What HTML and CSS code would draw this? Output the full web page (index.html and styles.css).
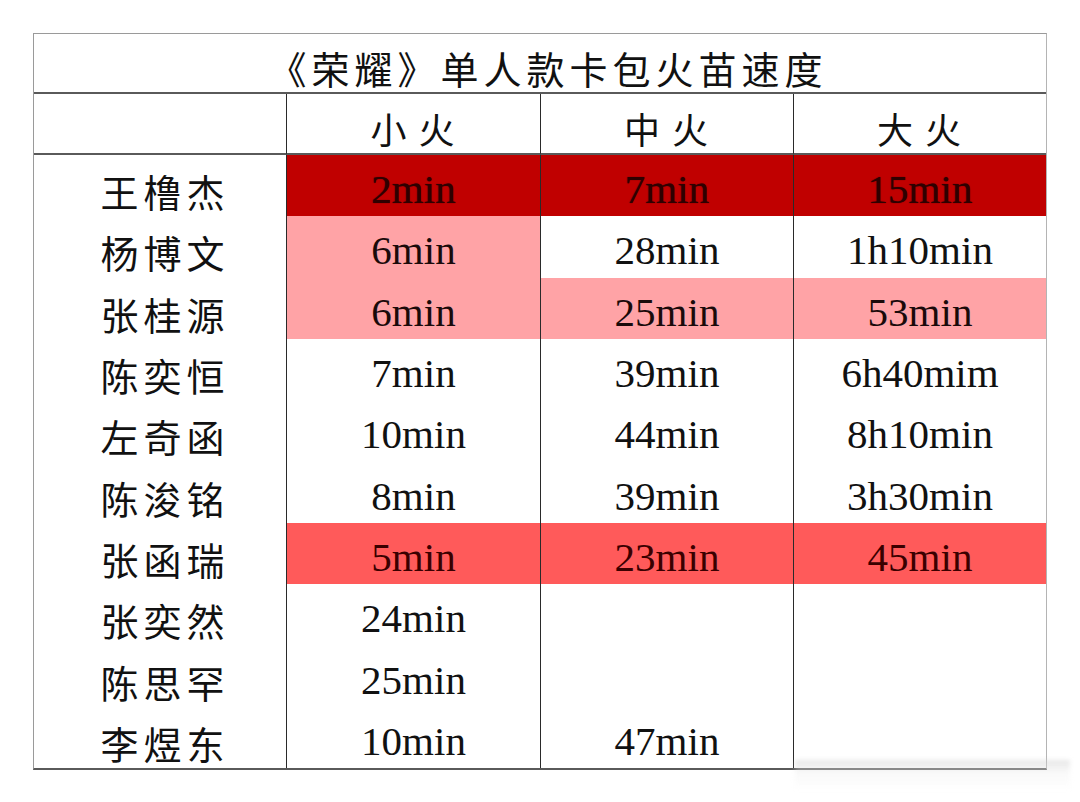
FILE: index.html
```html
<!DOCTYPE html>
<html lang="zh">
<head>
<meta charset="utf-8">
<title>《荣耀》单人款卡包火苗速度</title>
<link rel="stylesheet" href="styles.css">
</head>
<body>
<div class="page">
  <div class="sheet">
    <div class="title">《荣耀》单人款卡包火苗速度</div>

    <div class="head name"></div>
    <div class="head col">小火</div>
    <div class="head col">中火</div>
    <div class="head col">大火</div>

    <div class="name">王橹杰</div>
    <div class="cell dark">2min</div>
    <div class="cell dark">7min</div>
    <div class="cell dark">15min</div>

    <div class="name">杨博文</div>
    <div class="cell pink">6min</div>
    <div class="cell">28min</div>
    <div class="cell">1h10min</div>

    <div class="name">张桂源</div>
    <div class="cell pink">6min</div>
    <div class="cell pink">25min</div>
    <div class="cell pink">53min</div>

    <div class="name">陈奕恒</div>
    <div class="cell">7min</div>
    <div class="cell">39min</div>
    <div class="cell">6h40mim</div>

    <div class="name">左奇函</div>
    <div class="cell">10min</div>
    <div class="cell">44min</div>
    <div class="cell">8h10min</div>

    <div class="name">陈浚铭</div>
    <div class="cell">8min</div>
    <div class="cell">39min</div>
    <div class="cell">3h30min</div>

    <div class="name">张函瑞</div>
    <div class="cell red">5min</div>
    <div class="cell red">23min</div>
    <div class="cell red">45min</div>

    <div class="name">张奕然</div>
    <div class="cell">24min</div>
    <div class="cell"></div>
    <div class="cell"></div>

    <div class="name">陈思罕</div>
    <div class="cell">25min</div>
    <div class="cell"></div>
    <div class="cell"></div>

    <div class="name">李煜东</div>
    <div class="cell">10min</div>
    <div class="cell">47min</div>
    <div class="cell"></div>
  </div>
  <div class="watermark"></div>
</div>
</body>
</html>
```
FILE: styles.css
```css
* { box-sizing: border-box; }
html, body { margin: 0; padding: 0; background: #ffffff; }
body { width: 1080px; height: 802px; overflow: hidden; }

.page {
  position: relative;
  padding: 33px 0 0 33px;
}

.sheet {
  width: 1014px;
  display: grid;
  grid-template-columns: 252px 254px 253px 253px;
  grid-template-rows: 60px 61px repeat(10, 61.3px);
  border-top: 1px solid #9a9a9a;
  border-left: 1px solid #9a9a9a;
  border-right: 1px solid #b4b4b4;
  border-bottom: 2px solid #5a5a5a;
  color: #111;
}

.title {
  grid-column: 1 / 5;
  border-bottom: 2px solid #5a5a5a;
  display: flex;
  align-items: center;
  justify-content: center;
  padding: 8px 0 0 16px;
  font-family: "Noto Sans CJK SC", sans-serif;
  font-size: 38px;
  letter-spacing: 5px;
  font-weight: 400;
}

.head {
  border-bottom: 2px solid #5a5a5a;
}

.head.col {
  border-left: 1px solid #2a2a2a;
  display: flex;
  align-items: center;
  justify-content: center;
  padding: 8px 0 0 10px;
  font-family: "Noto Sans CJK SC", sans-serif;
  font-size: 36px;
  letter-spacing: 12px;
}

.name {
  display: flex;
  align-items: center;
  justify-content: center;
  padding: 10px 0 0 10px;
  font-family: "Noto Sans CJK SC", sans-serif;
  font-size: 38px;
  letter-spacing: 5px;
}

.cell {
  border-left: 1px solid #2a2a2a;
  display: flex;
  align-items: center;
  justify-content: center;
  padding-top: 7px;
  font-family: "Liberation Serif", "Times New Roman", serif;
  font-size: 41px;
}

.cell.dark {
  background: #c00000;
  color: #2e0000;
  text-shadow: 0 0 1px #3a0000;
}

.cell.pink {
  background: #ffa3a6;
  color: #1a0a0a;
}

.cell.red {
  background: #ff5a5a;
  color: #3a0000;
}

.watermark {
  position: absolute;
  left: 795px;
  top: 760px;
  width: 275px;
  height: 30px;
  background: linear-gradient(180deg, rgba(200,200,200,0.45) 0, rgba(235,235,235,0.3) 40%, rgba(255,255,255,0) 100%);
  filter: blur(2px);
}
```
